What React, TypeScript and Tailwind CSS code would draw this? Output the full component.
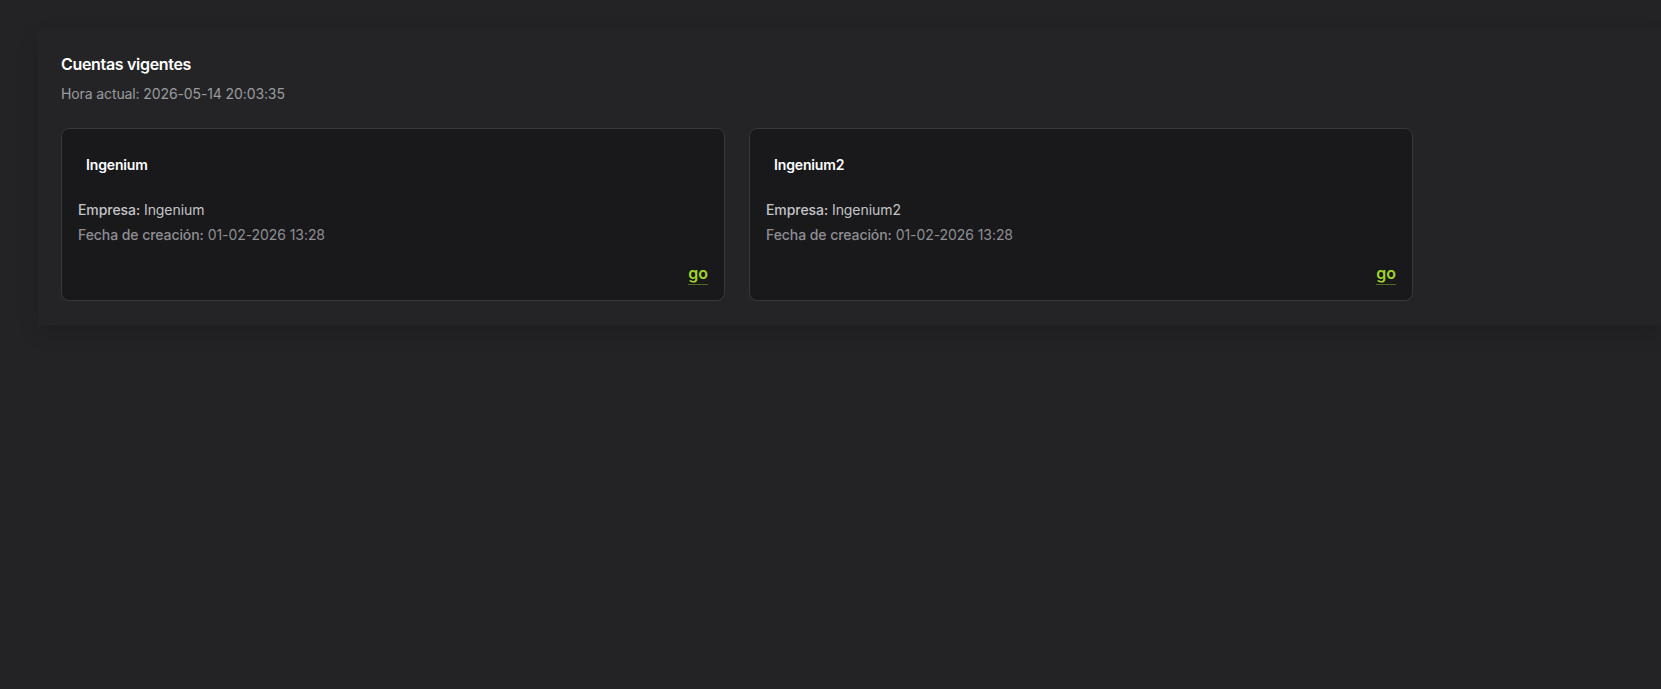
import React from "react";

type Account = {
  name: string;
  company: string;
  created: string;
};

const accounts: Account[] = [
  { name: "Ingenium", company: "Ingenium", created: "01-02-2026 13:28" },
  { name: "Ingenium2", company: "Ingenium2", created: "01-02-2026 13:28" },
];

function AccountCard({ account }: { account: Account }) {
  return (
    <div className="w-[664px] h-[173px] rounded-lg border border-[#38383b] bg-[#19191b] px-4 pt-4 pb-[15px] flex flex-col">
      <div className="px-2 pt-[10px] pb-2 text-[14px] leading-5 font-semibold text-white tracking-[-0.01em]">
        {account.name}
      </div>
      <div className="mt-[15px] text-[14px] leading-6 text-[#c4c4c6] tracking-[-0.005em]">
        <span className="font-medium">Empresa:</span> {account.company}
      </div>
      <div className="mt-px text-[14px] leading-6 text-[#8f8f93] tracking-[-0.005em]">
        <span className="font-medium">Fecha de creación:</span> {account.created}
      </div>
      <div className="mt-auto flex justify-end">
        <a
          href="#"
          className="text-[16px] font-semibold text-[#9fd32b] border-b border-[#4f6b1c] leading-[22px]"
        >
          go
        </a>
      </div>
    </div>
  );
}

export default function App() {
  return (
    <div
      className="min-h-[689px] w-full bg-[#232325] pl-[38px] pt-[30px]"
      style={{ fontFamily: "Inter, 'Noto Sans', 'Liberation Sans', sans-serif" }}
    >
      <section className="bg-[#242426] px-[23px] pt-[22px] pb-6 shadow-[0_8px_20px_rgba(0,0,0,0.14)]">
        <h2 className="text-[16px] leading-6 font-semibold text-white tracking-[-0.02em]">
          Cuentas vigentes
        </h2>
        <p className="mt-2 text-[14px] leading-5 text-[#9b9b9f] tracking-[-0.008em]">
          Hora actual: 2026-05-14 20:03:35
        </p>
        <div className="mt-6 flex gap-[24px]">
          {accounts.map((a) => (
            <AccountCard key={a.name} account={a} />
          ))}
        </div>
      </section>
    </div>
  );
}
